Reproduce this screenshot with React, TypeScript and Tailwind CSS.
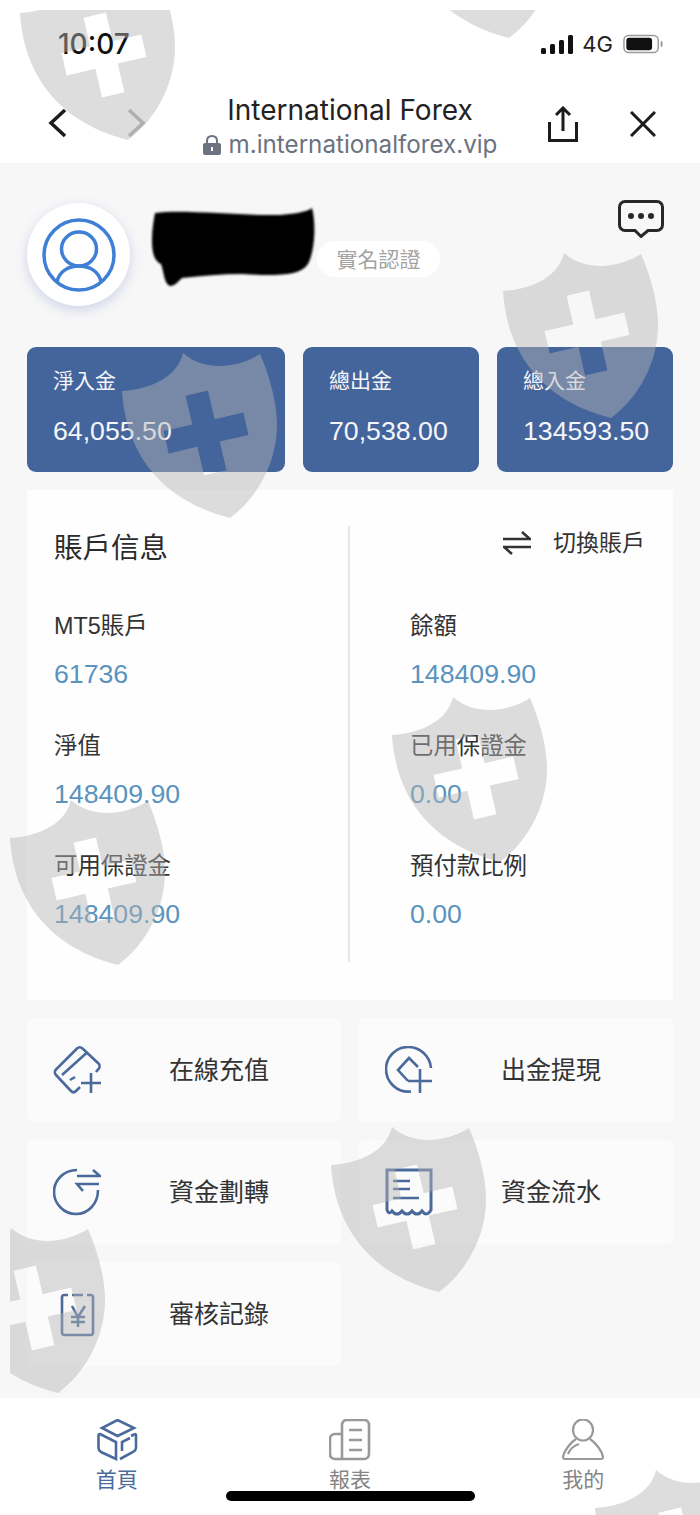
import type { ReactNode } from 'react';

const shields = [
  { id: 1, className: 'left-[10px] top-[-35px]' },
  { id: 2, className: 'left-[391px] top-[-137px]' },
  { id: 3, className: 'left-[493px] top-[243px]' },
  { id: 4, className: 'left-[112px] top-[343px]' },
  { id: 5, className: 'left-[382px] top-[687px]' },
  { id: 6, className: 'left-[0px] top-[790px]' },
  { id: 7, className: 'left-[321px] top-[1117px]' },
  { id: 8, className: 'left-[-60px] top-[1218px]' },
  { id: 9, className: 'left-[585px] top-[1460px]' },
];

function Shield({ className }: { className: string }) {
  return (
    <svg viewBox="0 0 156 165" className={`absolute h-[165px] w-[156px] ${className}`}>
      <path
        fill="rgb(180 180 180 / 0.46)"
        fillRule="evenodd"
        d="M61 0C56 22 32 36 0 38C3 90 30 145 108 165C135 145 155 110 155 72C155 48 147 22 138 1C118 14 84 20 61 0ZM63.6 42.7L86 37.5L92.6 66.2L121.3 59.6L126.5 82L97.8 88.6L104.4 117.3L82 122.5L75.4 93.8L46.7 100.4L41.5 78L70.2 71.4Z"
      />
    </svg>
  );
}

function StatCard({ label, value, className }: { label: string; value: string; className: string }) {
  return (
    <div className={`h-[125px] rounded-[9px] bg-[#44659c] pl-[26px] pt-[20px] text-[#f4f6fa] ${className}`}>
      <div className="text-[21px] leading-[28px]">{label}</div>
      <div className="mt-[21px] text-[26.7px] leading-[30px]">{value}</div>
    </div>
  );
}

function Field({ label, value }: { label: string; value: string }) {
  return (
    <div className="h-[120px]">
      <div className="text-[23.4px] leading-[30px] text-[#333]">{label}</div>
      <div className="mt-[18px] text-[26.7px] leading-[30px] text-[#5a93bd]">{value}</div>
    </div>
  );
}

function Action({ icon, label }: { icon: ReactNode; label: string }) {
  return (
    <div className="flex h-[104px] items-center rounded-[6px] bg-[#fbfbfb] pl-[26px]">
      <div className="h-[48px] w-[48px] shrink-0">{icon}</div>
      <div className="ml-[68px] pt-[2px] text-[25px] text-[#333]">{label}</div>
    </div>
  );
}

const iconClass = 'h-full w-full fill-none stroke-[#4a6a9c] stroke-[2.6]';

const CardIcon = (
  <svg viewBox="0 0 48 48" className={iconClass}>
    <path d="M27 41L23 45C21.5 46.5 19.5 46.5 18 45L3 29C1.5 27.5 1.5 25 3 23.5L24 2.5C25.5 1 28 1 29.5 2.5L45.5 17.5C47 19 47 21.5 45.5 23L43 26" />
    <path d="M9 29L33.5 7" />
    <path d="M17 34L22 31" />
    <path d="M38 27V47M28 37H48" />
  </svg>
);

const WithdrawIcon = (
  <svg viewBox="0 0 48 48" className={iconClass}>
    <path d="M26 45.5C12 47 1 36 1 23C1 11 11 1 23 1C35 1 45 10 46 22" />
    <path d="M23 35L13 24L24 12L33 21" />
    <path d="M35 23V47M23 35H47" />
  </svg>
);

const TransferIcon = (
  <svg viewBox="0 0 48 48" className={iconClass}>
    <path d="M24 2C11 2 1 12 1 24C1 36 11 46 23 46C35 46 45 36 45 22" />
    <path d="M24 8H47L40 2" />
    <path d="M46 16H24L30 23" />
  </svg>
);

const BillIcon = (
  <svg viewBox="0 0 48 48" className={iconClass}>
    <path className="stroke-[3]" d="M2 2H46V42C43 47 40 47 37 43C34 47 30 47 27 43C24 47 20 47 17 43C14 47 10 47 7 43C5 46 3 45 2 42Z" />
    <path d="M8 13H25M8 21H25M8 30H34" />
  </svg>
);

const AuditIcon = (
  <svg viewBox="0 0 48 48" className={iconClass}>
    <path d="M15 5H11C10 5 9 6 9 7V43C9 44 10 45 11 45H38C39 45 40 44 40 43V7C40 6 39 5 38 5H34M19 5H30" />
    <path d="M19 16L25 27L32 16M25 27V37M18 27H32M18 32H32" />
  </svg>
);

export default function App() {
  return (
    <div className="relative h-[1515px] w-[700px] overflow-hidden bg-white [font-family:'Liberation_Sans','Noto_Sans_CJK_TC',sans-serif]">
      <div className="flex h-[88px] items-center justify-between pl-[58px] pr-[37px]">
        <span className="text-[28px] font-medium text-[#111] [font-family:Inter,sans-serif]">10:07</span>
        <div className="flex items-center">
          <svg viewBox="0 0 32 19" className="h-[19px] w-[32px] fill-[#111]">
            <rect x="0" y="13" width="5" height="6" rx="1.5" />
            <rect x="9" y="9" width="5" height="10" rx="1.5" />
            <rect x="18" y="5" width="5" height="14" rx="1.5" />
            <rect x="27" y="0" width="5" height="19" rx="1.5" />
          </svg>
          <span className="ml-[9px] text-[22px] leading-none text-[#222] [font-family:Inter,sans-serif]">4G</span>
          <svg viewBox="0 0 42 20" className="ml-[10px] h-[20px] w-[40px]">
            <rect x="1" y="1" width="36" height="18" rx="5" fill="none" stroke="#999" strokeWidth="1.5" />
            <rect x="3.5" y="3.5" width="27" height="13" rx="3" fill="#111" />
            <rect x="39.5" y="7" width="2" height="6" rx="1" fill="#999" />
          </svg>
        </div>
      </div>

      <div className="grid h-[75px] grid-cols-[1fr_auto_1fr] px-[44px]">
        <div className="flex items-start gap-[58px] pl-[4px] pt-[20px]">
          <svg viewBox="0 0 20 30" className="h-[30px] w-[20px] fill-none stroke-[#1c1c1e] stroke-[3.5]">
            <path d="M17 2L3 15L17 28" />
          </svg>
          <svg viewBox="0 0 20 30" className="h-[30px] w-[20px] fill-none stroke-[#aaa] stroke-[3.5]">
            <path d="M3 2L17 15L3 28" />
          </svg>
        </div>
        <div className="flex flex-col items-center">
          <div className="text-[28px] leading-[44px] text-[#222] [font-family:Inter,sans-serif]">International Forex</div>
          <div className="-mt-[2px] flex items-center text-[24.2px] leading-[30px] text-[#6b7280] [font-family:Inter,sans-serif]">
            <svg viewBox="0 0 18 20" className="mr-[8px] h-[20px] w-[18px]">
              <path d="M4 9V6C4 3 6 1 9 1C12 1 14 3 14 6V9" fill="none" stroke="#6b7280" strokeWidth="2" />
              <rect x="0" y="8" width="18" height="12" rx="2" fill="#6b7280" />
              <rect x="8" y="12" width="2" height="4" fill="#fff" />
            </svg>
            m.internationalforex.vip
          </div>
        </div>
        <div className="flex items-start justify-end pt-[18px]">
          <svg viewBox="0 0 30 36" className="h-[36px] w-[30px] fill-none stroke-[#1c1c1e] stroke-[3]">
            <path d="M15 25V2M8 9L15 2L22 9M1.5 16V34.5H28.5V16" />
          </svg>
          <svg viewBox="0 0 26 26" className="ml-[52px] mt-[5px] h-[26px] w-[26px] fill-none stroke-[#1c1c1e] stroke-[3]">
            <path d="M1 1L25 25M25 1L1 25" />
          </svg>
        </div>
      </div>

      <div className="h-[1235px] bg-[#f7f7f8] px-[27px] pt-[40px]">
        <div className="flex h-[102px] items-start">
          <div className="flex h-[103px] w-[103px] shrink-0 items-center justify-center rounded-full bg-white shadow-[0_4px_12px_rgba(90,110,180,0.25)]">
            <svg viewBox="0 0 76 76" className="h-[76px] w-[76px] fill-none stroke-[#3f7fd6] stroke-[3.5]">
              <circle cx="38" cy="38" r="35" />
              <ellipse cx="38" cy="32" rx="17.5" ry="17" />
              <path d="M16 65C18 54 28 49 38 49C48 49 58 54 60 65" />
            </svg>
          </div>
          <svg viewBox="0 0 164 78" className="ml-[22px] mt-[5px] h-[78px] w-[164px] fill-black blur-[1px]">
            <path d="M3 5C30 1 90 8 128 7C140 6 155 4 160 0C164 15 163 40 157 54C150 68 130 68 90 66C70 66 50 68 30 70C25 75 22 78 18 78C12 76 12 64 9 56C5 54 2 50 1 44C-1 35 0 20 3 5Z" />
          </svg>
          <div className="ml-px mt-[38px] flex h-[36px] w-[123px] items-center justify-center rounded-full bg-white pt-[2px] text-[21px] text-[#a3a3a3]">
            實名認證
          </div>
          <svg viewBox="0 0 46 38" className="ml-auto mr-[9px] -mt-[3px] h-[38px] w-[46px]">
            <path d="M7 1.5H39C42 1.5 44.5 4 44.5 7V25C44.5 28 42 30.5 39 30.5H30L23 36.5L17 30.5H7C4 30.5 1.5 28 1.5 25V7C1.5 4 4 1.5 7 1.5Z" fill="none" stroke="#26282c" strokeWidth="3" />
            <circle cx="13" cy="16" r="3" fill="#26282c" />
            <circle cx="23" cy="16" r="3" fill="#26282c" />
            <circle cx="33" cy="16" r="3" fill="#26282c" />
          </svg>
        </div>

        <div className="mt-[42px] flex gap-[18px]">
          <StatCard label="淨入金" value="64,055.50" className="w-[258px]" />
          <StatCard label="總出金" value="70,538.00" className="w-[176px]" />
          <StatCard label="總入金" value="134593.50" className="w-[176px]" />
        </div>

        <div className="mt-[18px] grid h-[510px] grid-cols-[323px_1fr] grid-rows-[436px] rounded-[3px] bg-[#fefefe] pb-[38px] pt-[36px]">
          <div className="border-r-2 border-[#e6e6e6] pl-[27px]">
            <div className="h-[85px] pt-[4px] text-[28.5px] leading-[36px] text-[#2b2b2b]">賬戶信息</div>
            <Field label="MT5賬戶" value="61736" />
            <Field label="淨值" value="148409.90" />
            <Field label="可用保證金" value="148409.90" />
          </div>
          <div className="pl-[60px]">
            <div className="flex h-[85px] items-start justify-end pr-[28px] text-[23px] leading-[34px] text-[#333]">
              <svg viewBox="0 0 28 24" className="mr-[22px] mt-[5px] h-[24px] w-[28px] fill-none stroke-[#333] stroke-[2.5]">
                <path d="M0 8H27L19 1M28 16H1L9 23" />
              </svg>
              切換賬戶
            </div>
            <Field label="餘額" value="148409.90" />
            <Field label="已用保證金" value="0.00" />
            <Field label="預付款比例" value="0.00" />
          </div>
        </div>

        <div className="mt-[18px] grid grid-cols-[314px_314px] gap-x-[18px] gap-y-[18px]">
          <Action icon={CardIcon} label="在線充值" />
          <Action icon={WithdrawIcon} label="出金提現" />
          <Action icon={TransferIcon} label="資金劃轉" />
          <Action icon={BillIcon} label="資金流水" />
          <Action icon={AuditIcon} label="審核記錄" />
        </div>
      </div>

      <div className="grid h-[117px] grid-cols-3 bg-white text-[21px]">
        <div className="flex flex-col items-center pt-[21px] text-[#4a6a9c]">
          <svg viewBox="0 0 42 42" className="h-[42px] w-[42px] fill-none stroke-[#4a6a9c] stroke-[2.6]">
            <path d="M21.5 1L38 9L21.5 17L6 9Z" />
            <path d="M4 15L20 23V40L5 33C3.5 32 2.5 31 2.5 29V17C2.5 15 3 15 4 15Z" />
            <path d="M39 15L35 17M34 19L26 23V32M24 40L37 33C38.5 32 40 31 40 29V17C40 16 40 15 39 15" />
          </svg>
          <span className="mt-[3px] leading-[32px]">首頁</span>
        </div>
        <div className="flex flex-col items-center pt-[21px] text-[#858585]">
          <svg viewBox="0 0 42 42" className="h-[42px] w-[42px] fill-none stroke-[#999] stroke-[2.6]">
            <path d="M13 40V6C13 3 15 1 18 1H35C38 1 40 3 40 6V35C40 38 38 40 35 40H6C3 40 1 38 1 35V20C1 17 3 15 6 15H13" />
            <path d="M20 11H33M20 21H33M20 31H33" />
          </svg>
          <span className="mt-[3px] leading-[32px]">報表</span>
        </div>
        <div className="flex flex-col items-center pt-[21px] text-[#858585]">
          <svg viewBox="0 0 42 42" className="h-[42px] w-[42px] fill-none stroke-[#999] stroke-[2.2]">
            <ellipse cx="21" cy="11" rx="10" ry="10.5" />
            <path d="M14 20C8 24 2 32 1 38C1 39 2 40 3 40H39C40 40 41 39 41 38C40 32 34 24 28 20" />
            <path d="M6 35C8 30 11 27 17 25" />
          </svg>
          <span className="mt-[3px] leading-[32px]">我的</span>
        </div>
      </div>

      <div className="pointer-events-none absolute bottom-0 left-[10px] right-0 top-[10px] overflow-hidden">
        {shields.map((s) => (
          <Shield key={s.id} className={s.className} />
        ))}
      </div>

      <div className="absolute bottom-[14px] left-[226px] h-[10px] w-[249px] rounded-full bg-black" />
    </div>
  );
}
